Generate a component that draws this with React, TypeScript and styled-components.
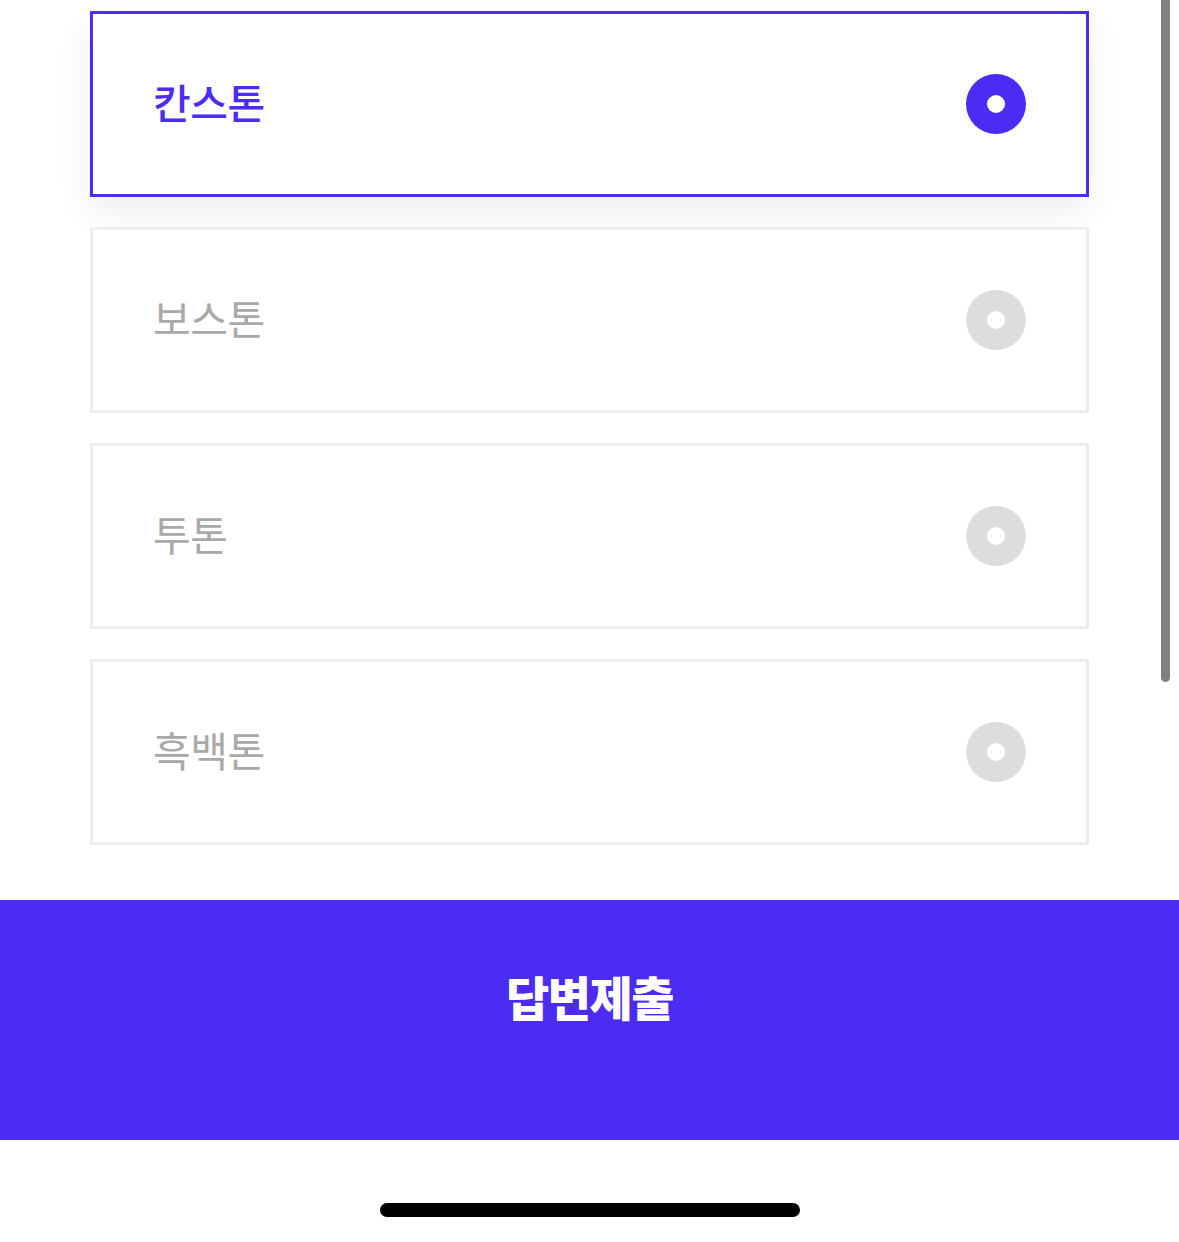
import React, { useState } from "react";
import styled, { createGlobalStyle, css } from "styled-components";

const GlobalStyle = createGlobalStyle`
  html, body { margin: 0; padding: 0; background: #ffffff; }
  body { font-family: "Noto Sans CJK KR", "Noto Sans", sans-serif; }
  * { box-sizing: border-box; }
`;

const PURPLE = "#4C2CF4";

const Page = styled.div`
  position: relative;
  width: 1179px;
  height: 1242px;
  display: flex;
  flex-direction: column;
  overflow: hidden;
`;

const List = styled.div`
  display: flex;
  flex-direction: column;
  gap: 30px;
  padding: 11px 90px 0 90px;
`;

const Card = styled.button<{ $selected: boolean }>`
  height: 186px;
  width: 100%;
  display: flex;
  align-items: center;
  justify-content: space-between;
  padding: 0 60px 0 60px;
  background: #fff;
  border: 3px solid #eeeeee;
  cursor: pointer;
  font-family: inherit;
  ${(p) =>
    p.$selected &&
    css`
      border-color: ${PURPLE};
      box-shadow: 0 14px 34px rgba(0, 0, 0, 0.07);
    `}
`;

const Label = styled.span<{ $selected: boolean }>`
  font-size: 41px;
  line-height: 1;
  letter-spacing: -0.5px;
  padding-bottom: 5px;
  font-weight: ${(p) => (p.$selected ? 500 : 400)};
  color: ${(p) => (p.$selected ? PURPLE : "#a9a9a9")};
`;

const Radio = styled.span<{ $selected: boolean }>`
  width: 60px;
  height: 60px;
  border-radius: 50%;
  background: ${(p) => (p.$selected ? PURPLE : "#dddddd")};
  display: flex;
  align-items: center;
  justify-content: center;
  &::after {
    content: "";
    width: 18px;
    height: 18px;
    border-radius: 50%;
    background: #fff;
  }
`;

const Submit = styled.button`
  margin-top: 55px;
  height: 240px;
  width: 100%;
  border: 0;
  background: ${PURPLE};
  color: #fff;
  font-family: "Noto Sans CJK KR", sans-serif;
  font-size: 47px;
  line-height: 1.2;
  font-weight: 900;
  letter-spacing: -1.5px;
  display: flex;
  align-items: flex-start;
  justify-content: center;
  padding-top: 68px;
  cursor: pointer;
`;

const HomeArea = styled.div`
  flex: 1;
  display: flex;
  justify-content: center;
  padding-top: 63px;
`;

const HomeIndicator = styled.div`
  width: 420px;
  height: 14px;
  border-radius: 7px;
  background: #000;
`;

const ScrollThumb = styled.div`
  position: absolute;
  top: 0;
  right: 9px;
  width: 9px;
  height: 682px;
  border-radius: 0 0 5px 5px;
  background: #808080;
`;

const options = ["칸스톤", "보스톤", "투톤", "흑백톤"];

export default function App() {
  const [selected, setSelected] = useState(0);
  return (
    <>
      <GlobalStyle />
      <Page>
        <List>
          {options.map((o, i) => (
            <Card key={o} $selected={selected === i} onClick={() => setSelected(i)}>
              <Label $selected={selected === i}>{o}</Label>
              <Radio $selected={selected === i} />
            </Card>
          ))}
        </List>
        <Submit>답변제출</Submit>
        <HomeArea>
          <HomeIndicator />
        </HomeArea>
        <ScrollThumb />
      </Page>
    </>
  );
}
